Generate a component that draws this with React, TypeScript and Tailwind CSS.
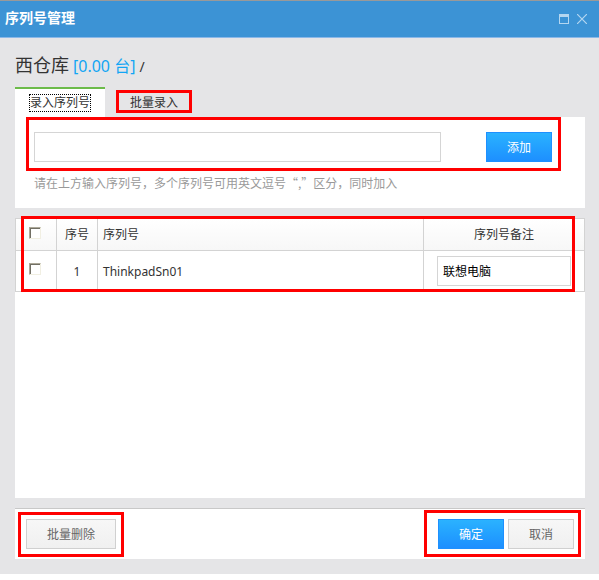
import { useState } from "react";
import type { ReactNode } from "react";

const blueButton =
  "h-[30px] w-[66px] border border-[#1e90ff] bg-linear-to-b from-[#2bb2ff] to-[#1e8fff] pt-px text-xs text-white";
const grayButton =
  "h-[30px] border border-[#d0d0d0] bg-linear-to-b from-[#f7f7f7] to-[#f0f0f0] pt-px text-xs text-[#666]";
const textBox = "h-[30px] border border-[#d5d5d5] bg-white px-[5px] text-xs text-black outline-none";

/** Red frame drawn over the area it marks. */
function Marker({ className }: { className: string }) {
  return <span aria-hidden="true" className={`pointer-events-none absolute border-3 border-[#ff0000] ${className}`} />;
}

function Tick({ label }: { label: string }) {
  return (
    <input
      type="checkbox"
      aria-label={label}
      className="block size-3 appearance-none border border-t-[#aca899] border-l-[#aca899] border-r-[#f1efe2] border-b-[#f1efe2] bg-white shadow-[inset_1px_1px_0_#716f64] checked:bg-[#1e90ff]"
    />
  );
}

function HeadCell({ className, children }: { className: string; children: ReactNode }) {
  return (
    <th
      scope="col"
      className={`border-y border-r border-[#d3d3d3] bg-linear-to-b from-white to-[#f7f7f7] font-normal ${className}`}
    >
      {children}
    </th>
  );
}

export default function App() {
  const [serial, setSerial] = useState("");
  const [note, setNote] = useState("联想电脑");

  return (
    <div className="bg-[#e5e5e7] pb-[15px] font-['Noto_Sans','Noto_Sans_CJK_SC',sans-serif] text-xs text-[#333]">
      <header className="flex h-[38px] items-center justify-between border-t border-b border-t-[#999] border-b-[#8bb8e8] bg-[#3c93d5] pr-3 pl-[5px] text-white">
        <h1 className="pb-0.5 text-sm font-bold">序列号管理</h1>
        <div className="flex gap-2 text-[#b4d6f0]">
          <button type="button" aria-label="最大化">
            <svg width="10" height="10" viewBox="0 0 10 10" shapeRendering="crispEdges">
              <path d="M0 0h10v10H0zM1 3v6h8V3z" fill="currentColor" fillRule="evenodd" />
            </svg>
          </button>
          <button type="button" aria-label="关闭">
            <svg width="10" height="10" viewBox="0 0 10 10">
              <path d="M0 0L10 10M10 0L0 10" stroke="currentColor" strokeWidth="1.2" />
            </svg>
          </button>
        </div>
      </header>

      <main className="pr-[14px] pl-[15px]">
        <h2 className="flex h-[49px] items-baseline gap-1 pt-[13px] text-lg">
          <span>西仓库</span>
          <span className="text-base text-[#12a5f4]">[0.00 台]</span>
          <span className="text-sm">/</span>
        </h2>

        <div role="tablist" className="flex h-[30px]">
          <button
            type="button"
            role="tab"
            aria-selected="true"
            className="flex w-[90px] items-center justify-center border-t-2 border-[#6cbb4a] bg-white"
          >
            <span className="border border-dotted border-black leading-4">录入序列号</span>
          </button>
          <button type="button" role="tab" aria-selected="false" className="relative w-[98px] border-t-2 border-transparent">
            批量录入
            <Marker className="top-px right-[11px] bottom-1 left-[11px]" />
          </button>
        </div>

        <section className="relative h-[91px] bg-white pt-[15px] pr-[33px] pl-[19px]">
          <form className="flex gap-[45px]" onSubmit={(e) => e.preventDefault()}>
            <input
              aria-label="序列号"
              value={serial}
              onChange={(e) => setSerial(e.target.value)}
              className={`${textBox} min-w-0 flex-1`}
            />
            <button type="submit" className={blueButton}>
              添加
            </button>
          </form>
          <p className="pt-3 font-['Noto_Sans_CJK_SC',sans-serif] leading-[18px] text-[#999]">
            请在上方输入序列号，多个序列号可用英文逗号“,”区分，同时加入
          </p>
          <Marker className="top-0 right-6 left-[11px] h-[54px]" />
        </section>

        <section className="relative mt-[10px] min-h-[280px] bg-white">
          <table className="w-full table-fixed border-separate border-spacing-0">
            <colgroup>
              <col className="w-[42px]" />
              <col className="w-[41px]" />
              <col />
              <col className="w-[161px]" />
            </colgroup>
            <thead>
              <tr className="h-[33px]">
                <HeadCell className="border-l pb-1 pl-[13px]">
                  <Tick label="全选" />
                </HeadCell>
                <HeadCell className="text-center">序号</HeadCell>
                <HeadCell className="pl-[5px] text-left">序列号</HeadCell>
                <HeadCell className="text-center">序列号备注</HeadCell>
              </tr>
            </thead>
            <tbody>
              <tr className="h-[41px]">
                <td className="border-x border-b border-[#d3d3d3] pb-1 pl-[13px]">
                  <Tick label="选择 ThinkpadSn01" />
                </td>
                <td className="border-r border-b border-[#d3d3d3] pt-0.5 text-center">1</td>
                <td className="border-r border-b border-[#d3d3d3] pt-0.5 pl-[5px]">ThinkpadSn01</td>
                <td className="border-r border-b border-[#d3d3d3] px-[13px] py-0">
                  <input
                    aria-label="序列号备注"
                    value={note}
                    onChange={(e) => setNote(e.target.value)}
                    className={`${textBox} block w-full`}
                  />
                </td>
              </tr>
            </tbody>
          </table>
          <Marker className="-top-[2px] right-[10px] left-[6px] h-[76px]" />
        </section>

        <footer className="mt-[10px] flex h-[51px] items-center justify-between border-t border-[#c8c8c8] bg-white px-[11px]">
          <div className="relative">
            <button type="button" className={`${grayButton} block w-[90px]`}>
              批量删除
            </button>
            <Marker className="-inset-x-2 -top-[7px] -bottom-2" />
          </div>
          <div className="relative flex gap-1">
            <button type="button" className={blueButton}>
              确定
            </button>
            <button type="button" className={`${grayButton} w-[66px]`}>
              取消
            </button>
            <Marker className="-top-[9px] -right-[7px] -bottom-2 -left-[14px]" />
          </div>
        </footer>
      </main>
    </div>
  );
}
